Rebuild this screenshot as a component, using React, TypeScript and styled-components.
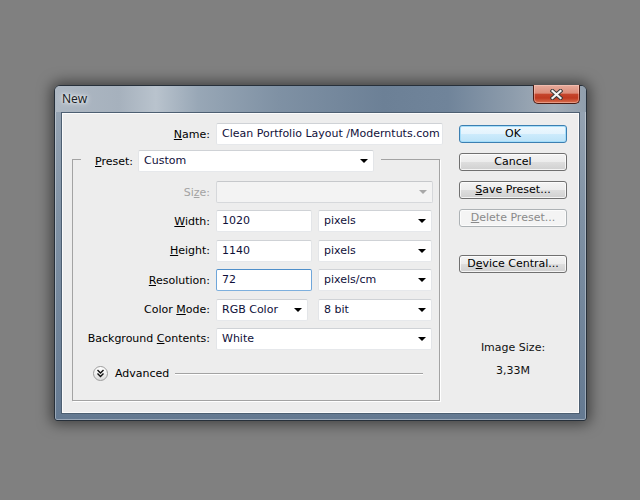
import styled, { createGlobalStyle } from "styled-components";

const GlobalStyle = createGlobalStyle`
  html, body { margin: 0; padding: 0; background: #808080; }
  body {
    font-family: "DejaVu Sans", Verdana, sans-serif;
    font-size: 11px;
    color: #000;
  }
`;

const Page = styled.div`
  width: 640px;
  height: 500px;
  box-sizing: border-box;
  padding: 85px 0 0 54px;
`;

const Window = styled.div`
  width: 533px;
  height: 336px;
  box-sizing: border-box;
  border: 1px solid #27303a;
  border-radius: 6px 6px 3px 3px;
  background: linear-gradient(180deg, #9aa7b5 0%, #7f91a4 40%, #647991 100%);
  box-shadow: 0 0 14px 3px rgba(0, 0, 0, 0.5), inset 0 0 0 1px rgba(255, 255, 255, 0.35);
  display: flex;
  flex-direction: column;
  padding: 0 6px 6px 6px;
`;

const TitleBar = styled.div`
  height: 26px;
  margin: 0 -6px;
  padding: 0 6px;
  border-radius: 5px 5px 0 0;
  display: flex;
  justify-content: space-between;
  align-items: flex-start;
  background: linear-gradient(
    90deg,
    #aeb8c3 0%,
    #a6b1bd 12%,
    #b9c3cd 19%,
    #98a7b6 27%,
    #7f91a4 42%,
    #6c8096 62%,
    #70849a 74%,
    #8d9cac 86%,
    #a3aeb9 94%,
    #909eac 100%
  );
`;

const Title = styled.span`
  font-family: "Noto Sans", "DejaVu Sans", sans-serif;
  font-size: 12px;
  line-height: 26px;
  padding-left: 1px;
  color: #1a1f26;
  text-shadow: 0 0 6px #fff, 0 0 3px rgba(255, 255, 255, 0.9);
`;

const CloseButton = styled.div`
  width: 47px;
  height: 19px;
  margin-top: -1px;
  box-sizing: border-box;
  border: 1px solid #4a1c14;
  border-top: none;
  border-radius: 0 0 5px 5px;
  background: linear-gradient(180deg, #e8ab9c 0%, #dc8d7a 45%, #c5452c 52%, #bf3a21 72%, #d9704f 100%);
  box-shadow: inset 0 0 0 1px rgba(255, 210, 200, 0.45);
  display: flex;
  align-items: center;
  justify-content: center;
`;

const Client = styled.div`
  flex: 1;
  display: flex;
  align-items: flex-start;
  background: #ededed;
  border: 1px solid #4d5f72;
  box-shadow: inset 1px 1px 0 #fbfbfb, inset -1px -1px 0 #fbfbfb;
  padding: 10px 0 0 10px;
`;

const FormColumn = styled.div`
  width: 371px;
  display: flex;
  flex-direction: column;
`;

const Row = styled.div<{ $label: number }>`
  display: grid;
  grid-template-columns: ${(p) => p.$label}px auto;
  column-gap: 6px;
  align-items: center;
`;

const Label = styled.span<{ $disabled?: boolean }>`
  text-align: right;
  white-space: nowrap;
  color: ${(p) => (p.$disabled ? "#a3a3a3" : "#000")};
`;

const Key = styled.span`
  text-decoration: underline;
`;

const Fields = styled.div<{ $gap?: number }>`
  display: flex;
  gap: ${(p) => p.$gap ?? 6}px;
`;

const Box = styled.div<{ $w: number; $h?: number; $focus?: boolean; $disabled?: boolean }>`
  position: relative;
  width: ${(p) => p.$w}px;
  height: ${(p) => p.$h ?? 22}px;
  box-sizing: border-box;
  padding: 0 5px;
  line-height: ${(p) => (p.$h ?? 22) - 2}px;
  white-space: nowrap;
  overflow: hidden;
  color: #10103a;
  background: ${(p) => (p.$disabled ? "#f3f3f3" : "#fff")};
  border: 1px solid;
  border-color: ${(p) =>
    p.$focus
      ? "#4f8fca #6fa6da #7eb0de #6fa6da"
      : p.$disabled
      ? "#c6c8cb #d6d8db #d6d8db #d6d8db"
      : "#cfd2d6 #e3e5e8 #e6e8eb #e3e5e8"};
  border-radius: 2px;
`;

const Arrow = styled.span<{ $disabled?: boolean }>`
  position: absolute;
  right: 5px;
  top: 50%;
  margin-top: -2px;
  width: 0;
  height: 0;
  border-left: 4px solid transparent;
  border-right: 4px solid transparent;
  border-top: 4px solid ${(p) => (p.$disabled ? "#a8a8a8" : "#000")};
`;

const Group = styled.fieldset`
  width: 368px;
  box-sizing: border-box;
  margin: 1px 0 0 0;
  padding: 9px 5px 18px 0;
  min-width: 0;
  border: 1px solid #a3a3a3;
  box-shadow: 1px 1px 0 #fff;
`;

const Legend = styled.legend`
  margin-left: 8px;
  padding: 4px 7px 0 14px;
  display: flex;
  align-items: center;
  gap: 5px;
`;

const GroupGrid = styled.div`
  display: grid;
  grid-template-columns: 137px auto;
  column-gap: 6px;
  row-gap: 7.4px;
  align-items: center;
`;

const AdvancedRow = styled.div`
  display: flex;
  align-items: center;
  height: 16px;
  margin-top: 16px;
  padding: 0 11px 0 20px;
`;

const AdvancedIcon = styled.span`
  width: 15px;
  height: 15px;
  box-sizing: border-box;
  border-radius: 50%;
  border: 1px solid #9d9d9d;
  background: linear-gradient(180deg, #ffffff 0%, #f1f1f1 50%, #dcdcdc 100%);
  display: flex;
  align-items: center;
  justify-content: center;
  margin-right: 7px;
`;

const Rule = styled.span`
  flex: 1;
  height: 1px;
  margin-left: 6px;
  background: #a3a3a3;
  border-bottom: 1px solid #fff;
`;

const ButtonColumn = styled.div`
  width: 108px;
  margin: 2px 0 0 16px;
  display: flex;
  flex-direction: column;
  gap: 10px;
`;

const Button = styled.div<{ $primary?: boolean; $disabled?: boolean; $gapBefore?: number }>`
  height: 18px;
  box-sizing: border-box;
  border-radius: 3px;
  text-align: center;
  line-height: 16px;
  margin-top: ${(p) => p.$gapBefore ?? 0}px;
  color: ${(p) => (p.$disabled ? "#8a8a8a" : "#000")};
  border: 1px solid ${(p) => (p.$primary ? "#3c7fb1" : p.$disabled ? "#adb2b5" : "#707070")};
  background: ${(p) =>
    p.$primary
      ? "linear-gradient(180deg, #eef8fe 0%, #e3f3fd 50%, #cdebfc 51%, #bde3f8 100%)"
      : p.$disabled
      ? "#f4f4f4"
      : "linear-gradient(180deg, #f4f4f4 0%, #ececec 50%, #dedede 51%, #d0d0d0 100%)"};
  box-shadow: inset 0 0 0 1px ${(p) => (p.$primary ? "rgba(160,220,250,0.9)" : "rgba(255,255,255,0.75)")};
`;

const SizeInfo = styled.div`
  margin-top: 58px;
  display: flex;
  flex-direction: column;
  align-items: center;
  gap: 9px;
  line-height: 14px;
  color: #111;
`;

const XMark = () => (
  <svg width="13" height="11" viewBox="0 0 13 11">
    <path d="M2.5 2 L10.5 9 M10.5 2 L2.5 9" stroke="#3a3a3a" strokeWidth="4.2" strokeLinecap="square" fill="none" />
    <path d="M2.5 2 L10.5 9 M10.5 2 L2.5 9" stroke="#f4f4f4" strokeWidth="2.2" strokeLinecap="square" fill="none" />
  </svg>
);

const Chevrons = () => (
  <svg width="9" height="9" viewBox="0 0 9 9">
    <path d="M1.5 1 L4.5 4 L7.5 1 M1.5 4.5 L4.5 7.5 L7.5 4.5" stroke="#111" strokeWidth="1.4" fill="none" />
  </svg>
);

const Select = ({ w, value, disabled }: { w: number; value?: string; disabled?: boolean }) => (
  <Box $w={w} $disabled={disabled}>
    {value}
    <Arrow $disabled={disabled} />
  </Box>
);

export default function App() {
  return (
    <>
      <GlobalStyle />
      <Page>
        <Window>
          <TitleBar>
            <Title>New</Title>
            <CloseButton>
              <XMark />
            </CloseButton>
          </TitleBar>
          <Client>
            <FormColumn>
              <Row $label={138}>
                <Label>
                  <Key>N</Key>ame:
                </Label>
                <Box $w={227}>Clean Portfolio Layout /Moderntuts.com</Box>
              </Row>
              <Group>
                <Legend>
                  <Label>
                    <Key>P</Key>reset:
                  </Label>
                  <Select w={236} value="Custom" />
                </Legend>
                <GroupGrid>
                  <Label $disabled>
                    Si<Key>z</Key>e:
                  </Label>
                  <Select w={217} disabled />

                  <Label>
                    <Key>W</Key>idth:
                  </Label>
                  <Fields>
                    <Box $w={96}>1020</Box>
                    <Select w={114} value="pixels" />
                  </Fields>

                  <Label>
                    <Key>H</Key>eight:
                  </Label>
                  <Fields>
                    <Box $w={96}>1140</Box>
                    <Select w={114} value="pixels" />
                  </Fields>

                  <Label>
                    <Key>R</Key>esolution:
                  </Label>
                  <Fields>
                    <Box $w={96} $focus>
                      72
                    </Box>
                    <Select w={114} value="pixels/cm" />
                  </Fields>

                  <Label>
                    Color <Key>M</Key>ode:
                  </Label>
                  <Fields $gap={10}>
                    <Select w={92} value="RGB Color" />
                    <Select w={114} value="8 bit" />
                  </Fields>

                  <Label>
                    Background <Key>C</Key>ontents:
                  </Label>
                  <Select w={216} value="White" />
                </GroupGrid>
                <AdvancedRow>
                  <AdvancedIcon>
                    <Chevrons />
                  </AdvancedIcon>
                  <span>Advanced</span>
                  <Rule />
                </AdvancedRow>
              </Group>
            </FormColumn>
            <ButtonColumn>
              <Button $primary>OK</Button>
              <Button>Cancel</Button>
              <Button>
                <Key>S</Key>ave Preset...
              </Button>
              <Button $disabled>
                <Key>D</Key>elete Preset...
              </Button>
              <Button $gapBefore={18}>
                D<Key>e</Key>vice Central...
              </Button>
              <SizeInfo>
                <span>Image Size:</span>
                <span>3,33M</span>
              </SizeInfo>
            </ButtonColumn>
          </Client>
        </Window>
      </Page>
    </>
  );
}
